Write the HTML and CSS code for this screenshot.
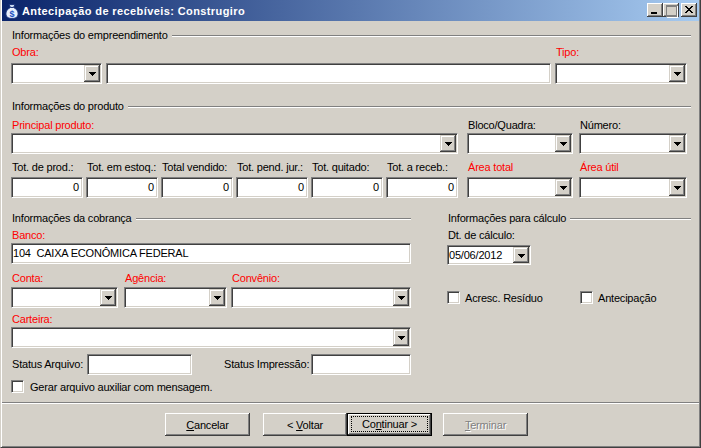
FILE: index.html
```html
<!DOCTYPE html>
<html lang="pt-BR">
<head>
<meta charset="utf-8">
<title>Antecipação de recebíveis: Construgiro</title>
<link rel="stylesheet" href="styles.css">
</head>
<body>
<div class="window">
  <div class="titlebar">
    <svg class="appicon" viewBox="0 0 16 16" width="16" height="16">
      <path d="M5 1.5h6l-1.5 3h-3z" fill="#c8d8f0" stroke="#203880" stroke-width="1"/>
      <path d="M6.5 4.5C3 6 1.5 9 2 12c.5 2.5 3 3.5 6 3.5s5.5-1 6-3.5c.5-3-1-6-4.5-7.5z" fill="#e8f0fc" stroke="#203880" stroke-width="1"/>
      <text x="8" y="13.5" text-anchor="middle" font-family="Liberation Sans, sans-serif" font-weight="bold" font-size="9" fill="#2050c0">$</text>
    </svg>
    <span class="title">Antecipação de recebíveis: Construgiro</span>
    <div class="caption-btns">
      <span class="cbtn min"></span>
      <span class="cbtn max"></span>
      <span class="cbtn close">
        <svg class="xglyph" viewBox="0 0 8 7" width="8" height="7" shape-rendering="crispEdges">
          <rect x="0" y="0" width="2" height="1"/><rect x="6" y="0" width="2" height="1"/>
          <rect x="1" y="1" width="2" height="1"/><rect x="5" y="1" width="2" height="1"/>
          <rect x="2" y="2" width="4" height="1"/>
          <rect x="3" y="3" width="2" height="1"/>
          <rect x="2" y="4" width="4" height="1"/>
          <rect x="1" y="5" width="2" height="1"/><rect x="5" y="5" width="2" height="1"/>
          <rect x="0" y="6" width="2" height="1"/><rect x="6" y="6" width="2" height="1"/>
        </svg>
      </span>
    </div>
  </div>

  <div class="content">
    <div class="hdr hdr-emp">Informações do empreendimento</div>
    <div class="row row-obra">
      <div class="grp f-obra"><span class="lbl req">Obra:</span><div class="field combo"><span class="dd"></span></div></div>
      <div class="grp f-obra-desc"><span class="lbl"></span><div class="field"></div></div>
      <div class="grp f-tipo"><span class="lbl req">Tipo:</span><div class="field combo"><span class="dd"></span></div></div>
    </div>

    <div class="hdr hdr-prod">Informações do produto</div>
    <div class="row row-prod">
      <div class="grp f-principal"><span class="lbl req">Principal produto:</span><div class="field combo"><span class="dd"></span></div></div>
      <div class="grp f-bloco"><span class="lbl">Bloco/Quadra:</span><div class="field combo"><span class="dd"></span></div></div>
      <div class="grp f-numero"><span class="lbl">Número:</span><div class="field combo"><span class="dd"></span></div></div>
    </div>
    <div class="row row-tot">
      <div class="grp f-tot"><span class="lbl">Tot. de prod.:</span><div class="field num">0</div></div>
      <div class="grp f-tot"><span class="lbl">Tot. em estoq.:</span><div class="field num">0</div></div>
      <div class="grp f-tot"><span class="lbl">Total vendido:</span><div class="field num">0</div></div>
      <div class="grp f-tot"><span class="lbl">Tot. pend. jur.:</span><div class="field num">0</div></div>
      <div class="grp f-tot"><span class="lbl">Tot. quitado:</span><div class="field num">0</div></div>
      <div class="grp f-tot"><span class="lbl">Tot. a receb.:</span><div class="field num">0</div></div>
      <div class="grp f-bloco"><span class="lbl req">Área total</span><div class="field combo"><span class="dd"></span></div></div>
      <div class="grp f-numero"><span class="lbl req">Área útil</span><div class="field combo"><span class="dd"></span></div></div>
    </div>

    <div class="cols">
      <div class="col-left">
        <div class="hdr">Informações da cobrança</div>
        <div class="grp g-banco"><span class="lbl req">Banco:</span><div class="field txt">104&nbsp; CAIXA ECONÔMICA FEDERAL</div></div>
        <div class="row row-conta">
          <div class="grp f-conta"><span class="lbl req">Conta:</span><div class="field combo"><span class="dd"></span></div></div>
          <div class="grp f-agencia"><span class="lbl req">Agência:</span><div class="field combo"><span class="dd"></span></div></div>
          <div class="grp f-convenio"><span class="lbl req">Convênio:</span><div class="field combo"><span class="dd"></span></div></div>
        </div>
        <div class="grp g-carteira"><span class="lbl req">Carteira:</span><div class="field combo"><span class="dd"></span></div></div>
        <div class="status-row">
          <span class="lbl st-arq-l">Status Arquivo:</span>
          <div class="field st-arq"></div>
          <span class="lbl st-imp-l">Status Impressão:</span>
          <div class="field st-imp"></div>
        </div>
        <div class="chk-row chk-gerar">
          <span class="chk"></span><span class="chk-txt">Gerar arquivo auxiliar com mensagem.</span>
        </div>
      </div>
      <div class="col-right">
        <div class="hdr">Informações para cálculo</div>
        <div class="grp g-dt"><span class="lbl">Dt. de cálculo:</span><div class="field combo date"><span class="date-txt">05/06/2012</span><span class="dd"></span></div></div>
        <div class="chk-row chk-calc">
          <div class="chk-item chk-acresc"><span class="chk"></span><span class="chk-txt">Acresc. Resíduo</span></div>
          <div class="chk-item"><span class="chk"></span><span class="chk-txt">Antecipação</span></div>
        </div>
      </div>
    </div>
  </div>

  <div class="sep"></div>
  <div class="btnrow">
    <div class="btn b-cancel"><span><u>C</u>ancelar</span></div>
    <div class="btn b-back"><span>&lt; <u>V</u>oltar</span></div>
    <div class="btn b-next"><span class="focus">Co<u>n</u>tinuar &gt;</span></div>
    <div class="btn b-finish disabled"><span><u>T</u>erminar</span></div>
  </div>
</div>
</body>
</html>
```
FILE: styles.css
```css
* { box-sizing: border-box; }
html, body { margin: 0; padding: 0; }
body {
  width: 701px;
  height: 448px;
  overflow: hidden;
  background: #d4d0c8;
  font-family: "Liberation Sans", Arial, sans-serif;
  font-size: 11px;
  letter-spacing: -0.2px;
  color: #000;
}

.window {
  width: 701px;
  height: 448px;
  background: #d4d0c8;
  border-left: 1px solid #d4d0c8;
  border-right: 1px solid #404040;
  border-bottom: 1px solid #404040;
  box-shadow: inset 1px 0 #fff, inset -1px -1px #808080;
  padding: 0 1px 1px 1px;
}

/* title bar */
.titlebar {
  height: 21px;
  display: flex;
  align-items: center;
  background: linear-gradient(to right, #0a246a, #a6caf0);
  color: #fff;
}
.appicon { width: 16px; height: 16px; margin-left: 2px; flex: none; }
.title {
  margin-left: 2px;
  font-weight: bold;
  font-size: 11px;
  letter-spacing: 0.4px;
  white-space: nowrap;
}
.caption-btns {
  margin-left: auto;
  margin-right: 2px;
  align-self: flex-start;
  margin-top: 3px;
  display: flex;
}
.cbtn {
  width: 16px;
  height: 14px;
  display: flex;
  align-items: flex-start;
  background: #d4d0c8;
  box-shadow: inset -1px -1px #404040, inset 1px 1px #fff, inset -2px -2px #808080, inset 2px 2px #d4d0c8;
}
.cbtn.close { margin-left: 2px; }
.min::after {
  content: "";
  width: 6px;
  height: 2px;
  background: #000;
  margin: 9px 0 0 4px;
}
.max::after {
  content: "";
  width: 9px;
  height: 9px;
  border: 1px solid #808080;
  border-top-width: 2px;
  margin: 2px 0 0 3px;
  box-shadow: 1px 1px #fff;
}
.xglyph { margin: 3px 0 0 4px; fill: #000; }

/* content */
.content { padding: 0 8px 0 9px; }

.hdr {
  display: flex;
  align-items: center;
  height: 13px;
  line-height: 13px;
  padding-left: 1px;
  white-space: nowrap;
}
.hdr::after {
  content: "";
  flex: 1;
  border-top: 1px solid #808080;
  border-bottom: 1px solid #fff;
  margin-left: 4px;
}
.hdr-emp { margin-top: 8px; }
.hdr-prod { margin-top: 16px; }

.row { display: flex; }
.grp { display: flex; flex-direction: column; flex: none; }
.lbl {
  display: block;
  height: 13px;
  line-height: 13px;
  padding-left: 1px;
  white-space: nowrap;
}
.req { color: #f00; }

.field {
  height: 21px;
  background: #fff;
  border: 1px solid;
  border-color: #808080 #fff #fff #808080;
  box-shadow: inset 1px 1px #404040, inset -1px -1px #d4d0c8;
  white-space: nowrap;
  overflow: hidden;
}
.combo { display: flex; justify-content: flex-end; padding: 1px; }
.dd {
  width: 16px;
  height: 100%;
  flex: none;
  display: flex;
  align-items: center;
  justify-content: center;
  padding-top: 1px;
  background: #d4d0c8;
  box-shadow: inset -1px -1px #404040, inset 1px 1px #d4d0c8, inset -2px -2px #808080, inset 2px 2px #fff;
}
.dd::after {
  content: "";
  width: 7px;
  height: 4px;
  background:
    linear-gradient(#000, #000) 0 0 / 7px 1px no-repeat,
    linear-gradient(#000, #000) 1px 1px / 5px 1px no-repeat,
    linear-gradient(#000, #000) 2px 2px / 3px 1px no-repeat,
    linear-gradient(#000, #000) 3px 3px / 1px 1px no-repeat;
}
.num { text-align: right; padding-right: 3px; line-height: 19px; }
.txt { padding-left: 1px; line-height: 19px; }

/* row 1 */
.row-obra { margin-top: 4px; }
.row-obra .grp { gap: 4px; }
.f-obra { width: 91px; }
.f-obra-desc { width: 445px; margin-left: 4px; }
.f-tipo { width: 132px; margin-left: 4px; }

/* row 2 */
.row-prod { margin-top: 6px; }
.row-prod .grp { gap: 1px; }
.f-principal { width: 447px; }
.f-bloco { width: 106px; margin-left: 9px; }
.f-numero { width: 108px; margin-left: 6px; }

/* row 3 */
.row-tot { margin-top: 7px; }
.row-tot .grp { gap: 3px; }
.f-tot { width: 72px; margin-left: 3px; }
.f-tot:first-child { margin-left: 0; }

/* section 3 */
.cols { display: flex; margin-top: 14px; }
.col-left { width: 400px; flex: none; }
.col-right { flex: 1; margin-left: 36px; }

.g-banco { margin-top: 4px; gap: 1px; }
.row-conta { margin-top: 8px; }
.row-conta .grp { gap: 2px; }
.f-conta { width: 107px; }
.f-agencia { width: 103px; margin-left: 6px; }
.f-convenio { width: 180px; margin-left: 4px; }
.g-carteira { margin-top: 5px; gap: 1px; }

.status-row { display: flex; align-items: center; margin-top: 6px; }
.st-arq-l { width: 76px; }
.st-arq { width: 105px; }
.st-imp-l { width: 88px; margin-left: 31px; }
.st-imp { width: 100px; }

.chk-row { display: flex; align-items: center; height: 13px; }
.chk-gerar { margin-top: 5px; }
.chk {
  width: 13px;
  height: 13px;
  flex: none;
  background: #fff;
  border: 1px solid;
  border-color: #808080 #fff #fff #808080;
  box-shadow: inset 1px 1px #404040, inset -1px -1px #d4d0c8;
}
.chk-txt { margin-left: 6px; white-space: nowrap; }
.chk-item { display: flex; align-items: center; }
.chk-acresc { width: 133px; }
.chk-acresc .chk-txt, .chk-item .chk-txt { margin-left: 5px; }

.g-dt { margin-top: 4px; gap: 3px; }
.date { width: 84px; height: 20px; justify-content: space-between; align-items: stretch; }
.date-txt { line-height: 16px; }
.chk-calc { margin-top: 26px; }

/* bottom */
.sep {
  margin-top: 9px;
  border-top: 1px solid #808080;
  border-bottom: 1px solid #fff;
}
.btnrow { display: flex; margin-top: 9px; padding-left: 163px; }
.btn {
  height: 23px;
  width: 85px;
  flex: none;
  display: flex;
  align-items: center;
  justify-content: center;
  background: #d4d0c8;
  box-shadow: inset -1px -1px #404040, inset 1px 1px #fff, inset -2px -2px #808080, inset 2px 2px #d4d0c8;
  white-space: nowrap;
}
.b-back { width: 84px; margin-left: 13px; }
.b-next { border: 1px solid #000; align-items: stretch; }
.b-next .focus {
  flex: 1;
  margin: 2px 3px 3px;
  border: 1px dotted #000;
  display: flex;
  align-items: center;
  justify-content: center;
}
.b-finish { margin-left: 11px; }
.disabled { color: #808080; text-shadow: 1px 1px #fff; }
```
